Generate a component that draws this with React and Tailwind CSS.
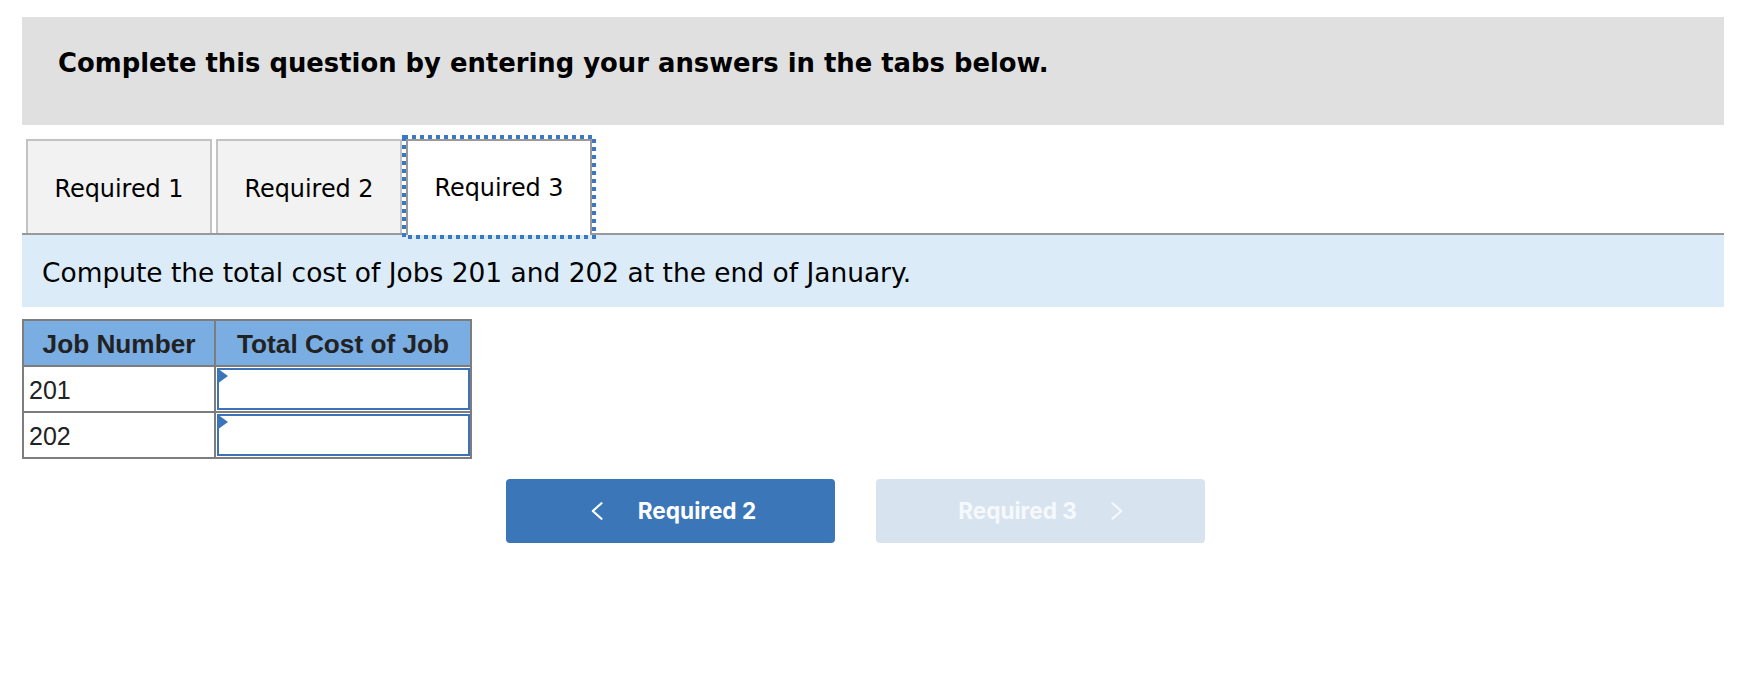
import React from "react";

const Chevron = ({ dir = "left", className = "" }) => (
  <svg width="12" height="18" viewBox="0 0 12 18" className={className} fill="none">
    {dir === "left" ? (
      <polyline points="10.5,1.2 1.8,9 10.5,16.8" stroke="currentColor" strokeWidth="2.2" strokeLinecap="round" strokeLinejoin="round" />
    ) : (
      <polyline points="1.5,1.2 10.2,9 1.5,16.8" stroke="currentColor" strokeWidth="2.2" strokeLinecap="round" strokeLinejoin="round" />
    )}
  </svg>
);

const Tab = ({ label, active }) => {
  if (active) {
    return (
      <div className="relative z-10 -mb-[2px] flex h-[96px] w-[186px] items-center justify-center border-2 border-b-0 border-[#999999] bg-white pt-[2px] pb-[2px] text-[23.9px] leading-[28px] text-black">
        {label}
        {/* focus ring */}
        <svg className="pointer-events-none absolute -left-[6px] -top-[6px]" width="194" height="104" viewBox="0 0 194 104">
          <rect x="2" y="2" width="190" height="100" fill="none" stroke="#3b78c4" strokeWidth="4" strokeDasharray="4 4" />
        </svg>
      </div>
    );
  }
  return (
    <div className="flex h-[94px] w-[186px] items-center justify-center border-2 border-b-0 border-[#c3c3c3] bg-[#f2f2f2] pt-[4px] text-[23.9px] leading-[28px] text-black">
      {label}
    </div>
  );
};

const AnswerCell = () => (
  <div className="relative flex-1 pl-[1px] pt-[1px] pb-[1px]">
    <div className="h-full w-full border-2 border-[#3d72b6] bg-white" />
    <svg className="absolute left-[1px] top-[1px]" width="11" height="16" viewBox="0 0 11 16">
      <polygon points="0,0 11,8 0,16" fill="#3b74b9" />
    </svg>
  </div>
);

export default function App() {
  const rows = ["201", "202"];

  return (
    <div className="h-[677px] w-[1751px] bg-white font-['DejaVu_Sans',sans-serif]">
      <div className="ml-[22px] w-[1702px] pt-[17px]">
        <div className="h-[108px] bg-[#e0e0e0] pl-[36px] pt-[31px]">
          <h1 className="text-[25.85px] font-bold leading-[30px] text-black">
            Complete this question by entering your answers in the tabs below.
          </h1>
        </div>

        <div className="mt-[14px] flex items-end gap-[4px] border-b-2 border-[#999999] pl-[4px]">
          <Tab label="Required 1" />
          <Tab label="Required 2" />
          <Tab label="Required 3" active />
        </div>

        <div className="flex h-[72px] items-center bg-[#dbecf8] pl-[20px] pt-[4px]">
          <p className="text-[26.45px] leading-[30px] text-black">
            Compute the total cost of Jobs 201 and 202 at the end of January.
          </p>
        </div>

        <div className="mt-[12px] w-[450px] border-2 border-[#7d7d7d] font-['Liberation_Sans',Arial,sans-serif] text-[#222222]">
          <div className="flex h-[46px] border-b-2 border-[#7d7d7d] bg-[#7aade2] text-[26.2px] font-bold leading-[29px]">
            <div className="flex w-[192px] items-center justify-center border-r-2 border-[#7d7d7d] pt-[2px]">Job Number</div>
            <div className="flex flex-1 items-center justify-center pt-[2px]">Total Cost of Job</div>
          </div>
          {rows.map((r, i) =>
            i < rows.length - 1 ? (
              <div key={r} className="flex h-[46px] border-b-2 border-[#7d7d7d] text-[25px] leading-[29px]">
                <div className="flex w-[192px] items-center border-r-2 border-[#7d7d7d] pl-[5px] pt-[2px]">{r}</div>
                <AnswerCell />
              </div>
            ) : (
              <div key={r} className="flex h-[44px] text-[25px] leading-[29px]">
                <div className="flex w-[192px] items-center border-r-2 border-[#7d7d7d] pl-[5px] pt-[2px]">{r}</div>
                <AnswerCell />
              </div>
            )
          )}
        </div>

        <div className="ml-[484px] mt-[20px] flex gap-[41px] font-['Inter',sans-serif] text-[22.6px] font-bold leading-[28px] text-white">
          <button className="flex h-[64px] w-[329px] items-center justify-center gap-[35px] rounded-[4px] bg-[#3b76b8] pl-[6px]">
            <Chevron dir="left" />
            <span>Required 2</span>
          </button>
          <button className="flex h-[64px] w-[329px] items-center justify-center gap-[34px] rounded-[4px] bg-[#d8e3f0] text-[#f6f9fc]">
            <span>Required 3</span>
            <Chevron dir="right" />
          </button>
        </div>
      </div>
    </div>
  );
}
